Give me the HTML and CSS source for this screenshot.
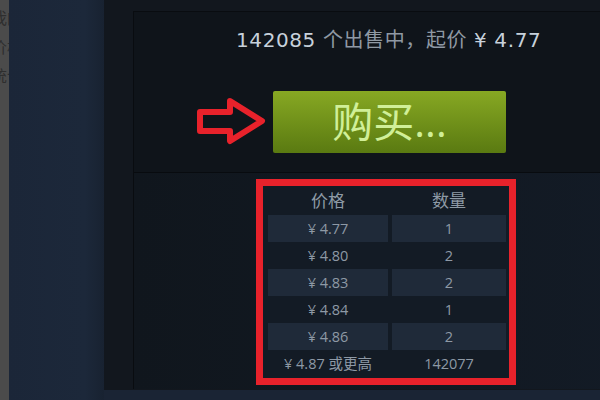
FILE: index.html
```html
<!DOCTYPE html>
<html>

	<head>
		<meta charset="utf-8" />
		<title>market</title>
		<link rel="stylesheet" href="styles.css">
	</head>

	<body>
		<div id="page">
			<div class="strip">
				<p>我的</p>
				<p>价格</p>
				<p>统计</p>
			</div>
			<div class="nav"></div>
			<div class="main">
				<div class="market">
					<div class="summary">
						<p class="count"><span class="hi">142085</span> 个出售中，起价 <span class="hi">¥ 4.77</span></p>
						<div class="buy-row">
							<svg class="arrow" width="74" height="52" viewBox="0 0 74 52">
								<path d="M6 16 H36 V5 L68 25 L36 45 V35 H6 Z" fill="none" stroke="#e8222b" stroke-width="6" stroke-linejoin="round"/>
							</svg>
							<a class="buy" href="javascript:;">购买...</a>
						</div>
					</div>
					<div class="orders">
						<div class="mark">
							<div class="table">
								<div class="th">价格</div><div class="th">数量</div>
								<div class="td odd">¥ 4.77</div><div class="td odd">1</div>
								<div class="td">¥ 4.80</div><div class="td">2</div>
								<div class="td odd">¥ 4.83</div><div class="td odd">2</div>
								<div class="td">¥ 4.84</div><div class="td">1</div>
								<div class="td odd">¥ 4.86</div><div class="td odd">2</div>
								<div class="td">¥ 4.87 或更高</div><div class="td">142077</div>
							</div>
						</div>
					</div>
				</div>
				<div class="foot"></div>
			</div>
		</div>
	</body>

</html>
```

FILE: styles.css
```css
*{margin: 0;padding: 0;text-decoration: none;box-sizing: border-box;}
html,body{width: 600px;height: 400px;overflow: hidden;}
body{
	background-color: #11161d;
	font-family: "Open Sans", "Noto Sans CJK SC", sans-serif;
}
#page{
	display: flex;
	height: 400px;
}
.strip{
	width: 9px;
	flex: none;
	overflow: hidden;
	background-color: #4b4b4b;
	padding-top: 4px;
}
.strip p{
	margin-left: -9px;
	font-size: 16px;
	line-height: 29px;
	color: #2e2e2e;
	white-space: nowrap;
}
.nav{
	width: 95px;
	flex: none;
	background: linear-gradient(to right, #1b2638, #1c283a 80%, #182231);
}
.main{
	flex: 1;
	display: flex;
	flex-direction: column;
	padding: 11px 0 0 29px;
	background-color: #12171e;
}
.market{
	width: 514px;
	border-left: 1px solid #090c10;
	border-top: 1px solid #090c10;
	box-shadow: inset 1px 1px 0 #1c222b;
}
.summary{
	height: 161px;
	border-bottom: 1px solid #080b0f;
	background-color: #0f141a;
	text-align: center;
}
.count{
	padding: 16px 0 0 102px;
	font-family: "DejaVu Sans", "Noto Sans CJK SC", sans-serif;
	font-size: 20px;
	line-height: 24px;
	letter-spacing: 0.6px;
	color: #8f99a4;
	text-align: left;
	white-space: nowrap;
}
.hi{color: #c7d1db;}
.buy-row{
	display: flex;
	align-items: center;
	margin-top: 39px;
	padding-left: 60px;
}
.arrow{
	display: block;
	margin-right: 5px;
}
.buy{
	display: block;
	width: 233px;
	height: 62px;
	line-height: 60px;
	border-radius: 2px;
	background: linear-gradient(to bottom, #87a823, #5a7a11);
	color: #d0ef98;
	font-size: 41px;
	text-align: center;
}
.orders{
	height: 216px;
	padding: 6px 0 0 122px;
	background: linear-gradient(to right, #10161d, #131b26);
}
.mark{
	width: 260px;
	border: 7px solid #e8222b;
	padding: 0 3px 1px 5px;
	background-color: #131b25;
}
.table{
	display: grid;
	grid-template-columns: 120px 114px;
	grid-template-rows: 29px repeat(6, 27px);
	column-gap: 4px;
	font-size: 14.5px;
	color: #8e99a5;
	text-align: center;
}
.th{
	font-size: 17px;
	line-height: 29px;
	color: #8e9aa6;
}
.td{
	line-height: 27px;
}
.td.odd{background-color: #1f2a39;}
.foot{
	flex: 1;
	background-color: #1a2434;
	margin-left: -29px;
	margin-top: 1px;
}
```
